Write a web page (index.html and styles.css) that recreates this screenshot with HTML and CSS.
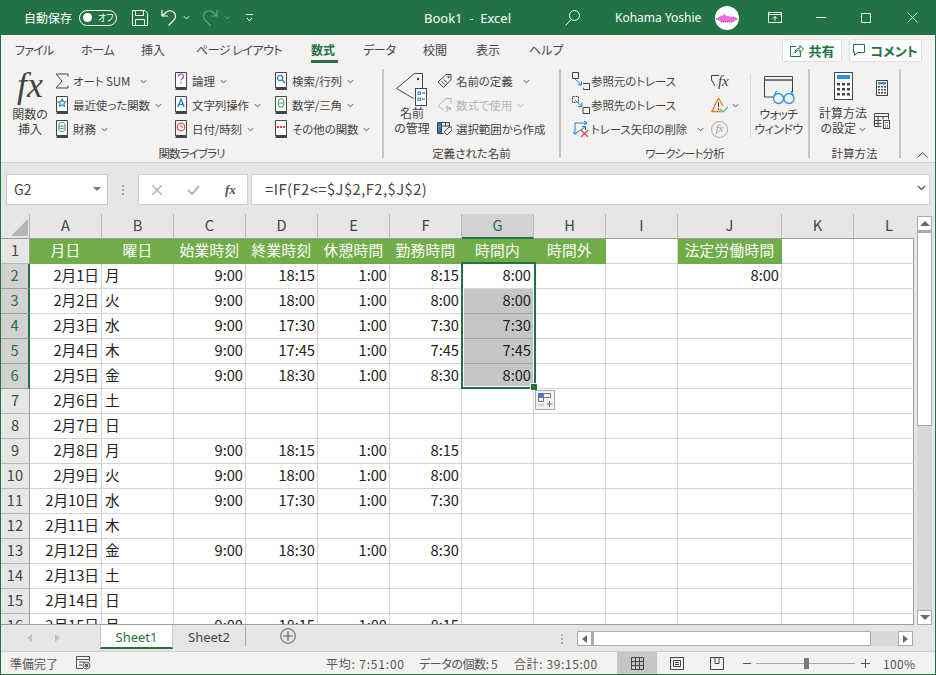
FILE: index.html
```html
<!DOCTYPE html>
<html lang="ja">
<head>
<meta charset="utf-8">
<title>Book1 - Excel</title>
<link rel="stylesheet" href="styles.css">
</head>
<body>
<svg class="defs" width="0" height="0">
  <symbol id="chev" viewBox="0 0 8 5"><path d="M1 1l3 3 3-3" fill="none" stroke="currentColor" stroke-width="1.1"/></symbol>
  <symbol id="book" viewBox="0 0 12 18"><path d="M.5 15.5V.5h11v15M.5 15.5a1 1 0 0 0 1 2h10v-2z" fill="#fff" stroke="#444"/><path d="M1 16.5h10.500" stroke="#444" stroke-width="2"/></symbol>
</svg>
<div class="window">
  <header class="titlebar">
    <span class="autosave">自動保存</span>
    <span class="toggle"><i class="knob"></i><b>オフ</b></span>
    <svg class="t-save" width="16" height="16" viewBox="0 0 16 16" fill="none" stroke="#fff"><path d="M.5.5h12.500l2.500 2.500v12.500h-15z"/><path d="M3.500.5v5h8v-5M3.500 15.500v-6h9v6"/></svg>
    <svg class="t-undo" width="16" height="17" viewBox="0 0 16 17" fill="none" stroke="#fff" stroke-width="1.200"><path d="M1 1v6h6M1.500 6.500l4-3.500a5.500 5.500 0 0 1 7 8.500l-5 5"/></svg>
    <svg class="t-chev c-white" width="7" height="5"><use href="#chev"/></svg>
    <svg class="t-redo" width="16" height="17" viewBox="0 0 16 17" fill="none" stroke="#6d9f83" stroke-width="1.200"><path d="M15 1v6H9M14.500 6.500l-4-3.500a5.500 5.500 0 0 0-7 8.500l5 5"/></svg>
    <svg class="t-chev c-dim" width="7" height="5"><use href="#chev"/></svg>
    <svg class="t-qat" width="8" height="8" viewBox="0 0 8 8" fill="none" stroke="#fff"><path d="M0 .5h7M1 4l2.500 3L6 4"/></svg>
    <span class="doc-title">Book1 &nbsp;-&nbsp; Excel</span>
    <svg class="t-search" width="15" height="16" viewBox="0 0 15 16" fill="none" stroke="#fff"><circle cx="9.500" cy="5.500" r="5"/><path d="M6 9.500L.5 15.500"/></svg>
    <span class="user">Kohama Yoshie</span>
    <svg class="avatar" width="24" height="24" viewBox="0 0 24 24"><circle cx="12" cy="12" r="12" fill="#fff"/><path d="M1 13l6-3 2-2 3 2 6 1 5 2-5 3H6z" fill="#ee6ee0"/><path d="M1 13l6-3M18 11l5 2M6 16h12" stroke="#333" stroke-width=".7" stroke-dasharray="1 1"/></svg>
    <svg class="t-disp" width="14" height="11" viewBox="0 0 14 11" fill="none" stroke="#fff"><path d="M.5.500h13v10H.5zM.5 2.500h13M7 8.500V4.500M5 6.500l2-2 2 2"/></svg>
    <svg class="t-min" width="10" height="1"><path d="M0 .5h10" stroke="#fff"/></svg>
    <svg class="t-max" width="10" height="10" fill="none" stroke="#fff"><path d="M.5.500h9v9h-9z"/></svg>
    <svg class="t-close" width="11" height="11" stroke="#fff"><path d="M.5.500l10 10M10.500.500l-10 10"/></svg>
  </header>

  <nav class="tabs">
    <span class="tab w-file">ファイル</span>
    <span class="tab w-home">ホーム</span>
    <span class="tab w-ins">挿入</span>
    <span class="tab w-page">ページ レイアウト</span>
    <span class="tab tab-active">数式</span>
    <span class="tab w-data">データ</span>
    <span class="tab w-rev">校閲</span>
    <span class="tab w-view">表示</span>
    <span class="tab w-help">ヘルプ</span>
    <span class="tab-btn btn-share"><svg width="15" height="14" viewBox="0 0 15 14" fill="none" stroke="#217346"><path d="M7 2.500H1.500v10h10V8M6 9c0-3 2-5 5-5V1.500l3.500 3.500L11 8.500V6C9 6 7 7 6 9z"/></svg>共有</span>
    <span class="tab-btn btn-comment"><svg width="13" height="13" viewBox="0 0 13 13" fill="none" stroke="#217346"><path d="M.5.500h11v8H4.500l-3 3v-3h-1z"/></svg>コメント</span>
  </nav>

  <section class="ribbon">
    <div class="group g-lib">
      <div class="g-body">
        <div class="big b-fx"><span class="fx-big">fx</span><span class="big-label">関数の<br>挿入</span></div>
        <div class="col col-1">
          <div class="item"><svg class="ic" width="14" height="16" viewBox="0 0 14 16" fill="none" stroke="#444"><path d="M13 3.500V1H1l6 7-6 7h12v-2.500"/></svg>オート SUM<svg class="chev ch-wide" width="7" height="5"><use href="#chev"/></svg></div>
          <div class="item"><svg class="ic" width="14" height="18" viewBox="0 0 14 18"><use href="#book" width="12" height="18" x="1"/><path d="M7 3l1.200 2.500 2.600.3-1.900 1.800.5 2.600L7 8.800 4.600 10.200l.5-2.600-1.900-1.800 2.600-.3z" fill="none" stroke="#1f7fc9" stroke-width="1.100"/></svg>最近使った関数<svg class="chev" width="7" height="5"><use href="#chev"/></svg></div>
          <div class="item"><svg class="ic" width="14" height="18" viewBox="0 0 14 18"><use href="#book" width="12" height="18" x="1"/><path d="M4 4c0-2 6-2 6 0v6c0 2-6 2-6 0zM4 5c0 1.500 6 1.500 6 0M4 7.500c0 1.500 6 1.500 6 0" fill="none" stroke="#4aa564"/></svg>財務<svg class="chev" width="7" height="5"><use href="#chev"/></svg></div>
        </div>
        <div class="col col-2">
          <div class="item"><svg class="ic" width="14" height="18" viewBox="0 0 14 18"><use href="#book" width="12" height="18" x="1"/><path d="M4.500 4.500a2.500 2.500 0 1 1 3.500 2.300c-.7.400-1 .8-1 1.700M7 10v1.500" fill="none" stroke="#b146c2" stroke-width="1.200"/></svg>論理<svg class="chev" width="7" height="5"><use href="#chev"/></svg></div>
          <div class="item"><svg class="ic" width="14" height="18" viewBox="0 0 14 18"><use href="#book" width="12" height="18" x="1"/><path d="M3.800 11L7 3l3.200 8M5 8.500h4" fill="none" stroke="#1f7fc9" stroke-width="1.300"/></svg>文字列操作<svg class="chev" width="7" height="5"><use href="#chev"/></svg></div>
          <div class="item"><svg class="ic" width="14" height="18" viewBox="0 0 14 18"><use href="#book" width="12" height="18" x="1"/><circle cx="7" cy="7" r="3.800" fill="none" stroke="#e64a4a" stroke-width="1.200"/><path d="M7 4.800V7h2" fill="none" stroke="#e64a4a"/></svg>日付/時刻<svg class="chev" width="7" height="5"><use href="#chev"/></svg></div>
        </div>
        <div class="col col-3">
          <div class="item"><svg class="ic" width="14" height="18" viewBox="0 0 14 18"><use href="#book" width="12" height="18" x="1"/><circle cx="6" cy="6" r="2.700" fill="none" stroke="#1f7fc9" stroke-width="1.200"/><path d="M8 8l3 3" stroke="#1f7fc9" stroke-width="1.400"/></svg>検索/行列<svg class="chev" width="7" height="5"><use href="#chev"/></svg></div>
          <div class="item"><svg class="ic" width="14" height="18" viewBox="0 0 14 18"><use href="#book" width="12" height="18" x="1"/><ellipse cx="7" cy="7" rx="2.800" ry="4.300" fill="none" stroke="#4aa564" stroke-width="1.100"/><path d="M4.500 7h5" stroke="#4aa564"/></svg>数学/三角<svg class="chev" width="7" height="5"><use href="#chev"/></svg></div>
          <div class="item"><svg class="ic" width="14" height="18" viewBox="0 0 14 18"><use href="#book" width="12" height="18" x="1"/><path d="M3 7h2M6 7h2M9 7h2" stroke="#e23c3c" stroke-width="2"/></svg>その他の関数<svg class="chev" width="7" height="5"><use href="#chev"/></svg></div>
        </div>
      </div>
      <div class="g-label kana-tight">関数ライブラリ</div>
    </div>

    <div class="group g-name">
      <div class="g-body">
        <div class="big b-name">
          <svg class="big-ic" width="34" height="38" viewBox="0 0 34 38" fill="none"><path d="M27.500 17V2.500H19.500L1.500 17.500 18.500 27.500" stroke="#444"/><circle cx="23" cy="8" r="1.200" fill="#444"/><rect x="20.500" y="17.500" width="11" height="17" fill="#fff" stroke="#444"/><path d="M23 21h2.500v2.500H23zM23 27h2.500v2.500H23z" fill="none" stroke="#1f7fc9"/><path d="M27 22h3M27 28h3" stroke="#444"/></svg>
          <span class="big-label">名前<br>の管理</span>
        </div>
        <div class="col col-n">
          <div class="item"><svg class="ic" width="15" height="16" viewBox="0 0 15 16" fill="none" stroke="#444"><path d="M1 9l8-7.500h5v5L6.500 14.500zM4.500 8.500l3.500 3M6.500 6.500l3.500 3"/><circle cx="11.500" cy="4" r=".8"/></svg>名前の定義<svg class="chev ch-wide" width="7" height="5"><use href="#chev"/></svg></div>
          <div class="item is-off"><svg class="ic" width="15" height="16" viewBox="0 0 15 16" fill="none" stroke="#b5b5b5"><path d="M7 13L1 9l8-7.500h5V7"/><path d="M9 10c1-2 2-1 2 0l-1 4c0 1-1 1-1.500.5M8 11h4M12 10l2 3M14 10l-2 3"/></svg>数式で使用<svg class="chev" width="7" height="5"><use href="#chev"/></svg></div>
          <div class="item"><svg class="ic" width="15" height="16" viewBox="0 0 15 16" fill="none" stroke="#444"><path d="M.5 1.500h12v5M.5 1.500v11h6M.5 5h12M4.500 1.500V13M8.500 1.500v4"/><rect x="1" y="6" width="3" height="6" fill="#1f7fc9" stroke="none"/><rect x="1" y="2" width="3" height="3" fill="#1f7fc9" stroke="none"/><path d="M7 11l5-5h3v3l-5 5z" fill="#f3f2f1"/></svg>選択範囲から作成</div>
        </div>
      </div>
      <div class="g-label">定義された名前</div>
    </div>

    <div class="group g-audit">
      <div class="g-body">
        <div class="col col-t">
          <div class="item"><svg class="ic-t" width="18" height="18" viewBox="0 0 18 18" fill="none"><path d="M.5.500h6v6h-6z" stroke="#444"/><path d="M3 7l6 5.500" stroke="#1f7fc9"/><path d="M9.500 9.500v3.500H6" stroke="#1f7fc9"/><path d="M11 11.500h6.500v6H11" stroke="#444"/><path d="M11.500 17.500v-2" stroke="#1f7fc9"/></svg>参照元のトレース</div>
          <div class="item"><svg class="ic-t" width="18" height="18" viewBox="0 0 18 18" fill="none"><path d="M.5.500h6v6h-6z" stroke="#444" stroke-dasharray="2 1"/><path d="M3 4l6.500 6" stroke="#1f7fc9"/><path d="M10 6.500v4H6" stroke="#1f7fc9"/><path d="M11 11.500h6.500v6H11z" stroke="#444"/></svg>参照先のトレース</div>
          <div class="item"><svg class="ic-t" width="18" height="18" viewBox="0 0 18 18" fill="none" stroke="#1f7fc9"><path d="M3 14V3h12M1 12l2 2.500L5 12M12 1l3 2-3 2M4 13L13 7M10 6.500h3.500V10"/><path d="M9 10l7 7M16 10l-7 7" stroke="#e64a4a" stroke-width="1.300"/></svg>トレース矢印の削除<svg class="chev ch-wide" width="7" height="5"><use href="#chev"/></svg></div>
        </div>
        <div class="col col-check">
          <div class="item item-ic"><svg width="8" height="12" viewBox="0 0 8 12" class="slash" fill="none" stroke="#444"><path d="M8 .5H.5V5L4 11"/></svg><span class="fx-s">fx</span></div>
          <div class="item item-ic"><svg width="17" height="16" viewBox="0 0 17 16" fill="none"><path d="M7.500 1L1 14.500h9" stroke="#e67e22" stroke-width="1.300"/><path d="M7.500 1L12 9" stroke="#e67e22" stroke-width="1.300"/><path d="M7.500 5v5M7.500 11v2" stroke="#444"/><path d="M9 12l3 3 5-5" stroke="#5bb06d" stroke-width="1.200"/></svg><svg class="chev ch-near" width="7" height="5"><use href="#chev"/></svg></div>
          <div class="item item-ic"><span class="fx-c">fx</span></div>
        </div>
        <div class="big b-watch">
          <svg class="big-ic" width="32" height="30" viewBox="0 0 32 30" fill="none"><path d="M1.500 22V1.500h28V17" stroke="#444"/><path d="M1.500 5h28" stroke="#444" stroke-width="1.400"/><path d="M1.500 22h9" stroke="#444"/><circle cx="15.500" cy="23.500" r="5" stroke="#2a93dc" stroke-width="1.300"/><circle cx="26" cy="23.500" r="5" stroke="#2a93dc" stroke-width="1.300"/><path d="M20.500 22.500h0.500M11 21l2.500-5M30.500 21L28 16" stroke="#2a93dc" stroke-width="1.300"/></svg>
          <span class="big-label">ウォッチ<br>ウィンドウ</span>
        </div>
      </div>
      <div class="g-label kana-tight">ワークシート分析</div>
    </div>

    <div class="group g-calc">
      <div class="g-body">
        <div class="big b-calc">
          <svg class="big-ic" width="19" height="28" viewBox="0 0 19 28"><rect x=".5" y=".5" width="18" height="27" fill="#fff" stroke="#444"/><rect x="3" y="3" width="13" height="4" fill="#2a93dc"/><path d="M3 11h3v2.500H3zM8 11h3v2.500H8zM13 11h3v2.500h-3zM3 16h3v2.500H3zM8 16h3v2.500H8zM13 16h3v2.500h-3zM3 21h3v2.500H3zM8 21h3v2.500H8zM13 21h3v2.500h-3z" fill="#444"/></svg>
          <span class="big-label">計算方法<br>の設定 <svg class="chev-in" width="7" height="5"><use href="#chev"/></svg></span>
        </div>
        <div class="col col-opt">
          <svg class="opt-a" width="12" height="16" viewBox="0 0 12 16"><rect x=".5" y=".5" width="11" height="15" fill="#fff" stroke="#444"/><rect x="2" y="2" width="8" height="2.500" fill="#2a93dc"/><path d="M2 6h2v1.500H2zM5 6h2v1.500H5zM8 6h2v1.500H8zM2 9h2v1.500H2zM5 9h2v1.500H5zM8 9h2v1.500H8zM2 12h2v1.500H2zM5 12h2v1.500H5zM8 12h2v1.500H8z" fill="#444"/></svg>
          <svg class="opt-b" width="16" height="16" viewBox="0 0 16 16" fill="none" stroke="#444"><path d="M7.500 13.500H.5V.5h14v6M.5 3.500h14M.5 7.500h7M.5 10.500h7M4 3.500v10M9 3.500v3"/><rect x="9.500" y="7.500" width="6" height="8" fill="#fff"/><path d="M11 9.500h3" stroke="#2a93dc"/><path d="M11 12h1M13 12h1M11 14h1M13 14h1"/></svg>
        </div>
      </div>
      <div class="g-label">計算方法</div>
    </div>
    <svg class="collapse" width="11" height="6" viewBox="0 0 11 6" fill="none" stroke="#444"><path d="M.5 5.500l5-5 5 5"/></svg>
  </section>

  <section class="formula">
    <div class="namebox"><span>G2</span><i class="tri"></i></div>
    <div class="fdots"><i></i><i></i><i></i></div>
    <div class="fbtns">
      <svg width="10" height="10" stroke="#b4b4b4" stroke-width="1.500"><path d="M0 0l10 10M10 0L0 10"/></svg>
      <svg width="13" height="10" fill="none" stroke="#b4b4b4" stroke-width="2"><path d="M1 5l4 4 7-8"/></svg>
      <span class="fx-f">fx</span>
    </div>
    <div class="finput"><span>=IF(F2&lt;=$J$2,F2,$J$2)</span><svg width="9" height="6" viewBox="0 0 9 6" fill="none" stroke="#666" stroke-width="1.500"><path d="M1 1l3.500 3.500L8 1"/></svg></div>
  </section>

  <section class="sheet">
    <div class="gridwrap">
      <table class="grid">
        <colgroup><col class="c-h"><col class="c-n"><col class="c-n"><col class="c-n"><col class="c-n"><col class="c-n"><col class="c-n"><col class="c-n"><col class="c-n"><col class="c-n"><col class="c-j"><col class="c-n"><col class="c-l"></colgroup>
        <thead>
          <tr><th class="corner"><svg width="17" height="17"><path d="M17 0v17H0z" fill="#b4b4b4"/></svg></th><th>A</th><th>B</th><th>C</th><th>D</th><th>E</th><th>F</th><th class="col-sel">G</th><th>H</th><th>I</th><th>J</th><th>K</th><th class="last">L</th></tr>
        </thead>
        <tbody>
          <tr><th>1</th><td class="hd">月日</td><td class="hd">曜日</td><td class="hd">始業時刻</td><td class="hd">終業時刻</td><td class="hd">休憩時間</td><td class="hd">勤務時間</td><td class="hd">時間内</td><td class="hd">時間外</td><td></td><td class="hd">法定労働時間</td><td></td><td class="last"></td></tr>
          <tr><th class="row-sel">2</th><td class="r">2月1日</td><td>月</td><td class="r">9:00</td><td class="r">18:15</td><td class="r">1:00</td><td class="r">8:15</td><td class="r">8:00</td><td></td><td></td><td class="r">8:00</td><td></td><td class="last"></td></tr>
          <tr><th class="row-sel">3</th><td class="r">2月2日</td><td>火</td><td class="r">9:00</td><td class="r">18:00</td><td class="r">1:00</td><td class="r">8:00</td><td class="r sel">8:00</td><td></td><td></td><td></td><td></td><td class="last"></td></tr>
          <tr><th class="row-sel">4</th><td class="r">2月3日</td><td>水</td><td class="r">9:00</td><td class="r">17:30</td><td class="r">1:00</td><td class="r">7:30</td><td class="r sel">7:30</td><td></td><td></td><td></td><td></td><td class="last"></td></tr>
          <tr><th class="row-sel">5</th><td class="r">2月4日</td><td>木</td><td class="r">9:00</td><td class="r">17:45</td><td class="r">1:00</td><td class="r">7:45</td><td class="r sel">7:45</td><td></td><td></td><td></td><td></td><td class="last"></td></tr>
          <tr><th class="row-sel">6</th><td class="r">2月5日</td><td>金</td><td class="r">9:00</td><td class="r">18:30</td><td class="r">1:00</td><td class="r">8:30</td><td class="r sel">8:00</td><td></td><td></td><td></td><td></td><td class="last"></td></tr>
          <tr><th>7</th><td class="r">2月6日</td><td>土</td><td></td><td></td><td></td><td></td><td></td><td></td><td></td><td></td><td></td><td class="last"></td></tr>
          <tr><th>8</th><td class="r">2月7日</td><td>日</td><td></td><td></td><td></td><td></td><td></td><td></td><td></td><td></td><td></td><td class="last"></td></tr>
          <tr><th>9</th><td class="r">2月8日</td><td>月</td><td class="r">9:00</td><td class="r">18:15</td><td class="r">1:00</td><td class="r">8:15</td><td></td><td></td><td></td><td></td><td></td><td class="last"></td></tr>
          <tr><th>10</th><td class="r">2月9日</td><td>火</td><td class="r">9:00</td><td class="r">18:00</td><td class="r">1:00</td><td class="r">8:00</td><td></td><td></td><td></td><td></td><td></td><td class="last"></td></tr>
          <tr><th>11</th><td class="r">2月10日</td><td>水</td><td class="r">9:00</td><td class="r">17:30</td><td class="r">1:00</td><td class="r">7:30</td><td></td><td></td><td></td><td></td><td></td><td class="last"></td></tr>
          <tr><th>12</th><td class="r">2月11日</td><td>木</td><td></td><td></td><td></td><td></td><td></td><td></td><td></td><td></td><td></td><td class="last"></td></tr>
          <tr><th>13</th><td class="r">2月12日</td><td>金</td><td class="r">9:00</td><td class="r">18:30</td><td class="r">1:00</td><td class="r">8:30</td><td></td><td></td><td></td><td></td><td></td><td class="last"></td></tr>
          <tr><th>14</th><td class="r">2月13日</td><td>土</td><td></td><td></td><td></td><td></td><td></td><td></td><td></td><td></td><td></td><td class="last"></td></tr>
          <tr><th>15</th><td class="r">2月14日</td><td>日</td><td></td><td></td><td></td><td></td><td></td><td></td><td></td><td></td><td></td><td class="last"></td></tr>
          <tr><th>16</th><td class="r">2月15日</td><td>月</td><td class="r">9:00</td><td class="r">18:15</td><td class="r">1:00</td><td class="r">8:15</td><td></td><td></td><td></td><td></td><td></td><td class="last"></td></tr>
        </tbody>
      </table>
      <div class="selection"><i class="handle"></i></div>
      <div class="smarttag"><svg width="16" height="15" viewBox="0 0 16 15" fill="none"><rect x=".5" y=".5" width="5" height="4" fill="#3f78e0" stroke="#3f78e0"/><path d="M5.500.5h7v4h-7zM.5 4.500h5v4h-5z" stroke="#777"/><path d="M.5 12h6" stroke="#777" stroke-dasharray="1 1"/><path d="M11.500 8v6M8.500 11h6" stroke="#777"/></svg></div>
    </div>
    <div class="vscroll">
      <div class="sb-btn"><i class="up"></i></div>
      <div class="v-thumb"></div>
      <div class="v-track"></div>
      <div class="sb-btn"><i class="down"></i></div>
    </div>
  </section>

  <section class="tabstrip">
    <i class="nav-l"></i><i class="nav-r"></i>
    <span class="sheet-tab sheet-active">Sheet1</span>
    <span class="sheet-tab">Sheet2</span>
    <svg class="add" width="16" height="16" viewBox="0 0 16 16" fill="none" stroke="#7a7a7a"><circle cx="8" cy="8" r="7.300" stroke-width="1.300"/><path d="M8 3.500v9M3.500 8h9" stroke-width="1.500"/></svg>
    <div class="hdots"><i></i><i></i><i></i></div>
    <div class="hscroll">
      <div class="sb-btn h"><i class="left"></i></div>
      <div class="h-thumb"></div>
      <div class="h-track"></div>
      <div class="sb-btn h"><i class="right"></i></div>
    </div>
  </section>

  <footer class="status">
    <span class="st-ready">準備完了</span>
    <svg class="st-macro" width="15" height="14" viewBox="0 0 15 14" fill="none" stroke="#555"><path d="M7 12.500H.5V.5h13v5M.5 3.500h13M3 6h6M3 9h3"/><circle cx="10.500" cy="9.500" r="3.500"/><circle cx="10.500" cy="9.500" r="1.500" fill="#555"/></svg>
    <span class="st-val st-avg">平均: 7:51:00</span>
    <span class="st-val st-cnt">データの個数: 5</span>
    <span class="st-val st-sum">合計: 39:15:00</span>
    <span class="view view-on"><svg width="13" height="13" fill="none" stroke="#444"><path d="M.5.500h12v12H.5zM4.500.5v12M8.500.5v12M.5 4.500h12M.5 8.500h12"/></svg></span>
    <span class="view"><svg width="14" height="13" fill="none" stroke="#444"><path d="M.5.500h13v12H.5zM3.500 3.500h7v6h-7zM5 5.500h4M5 7.500h4"/></svg></span>
    <span class="view"><svg width="14" height="13" fill="none" stroke="#444"><path d="M.5 8.500V.5h13v12H.5V8M5 .5v6h4V.5"/></svg></span>
    <svg class="z-minus" width="8" height="1"><path d="M0 .5h8" stroke="#555"/></svg>
    <div class="slider"><i></i></div>
    <svg class="z-plus" width="9" height="9" stroke="#555"><path d="M0 4.500h9M4.500 0v9"/></svg>
    <span class="z-val">100%</span>
  </footer>
</div>
</body>
</html>
```

FILE: styles.css
```css
* { box-sizing: border-box; }
html, body { margin: 0; padding: 0; }
body {
  width: 936px; height: 675px; overflow: hidden;
  font-family: "Noto Sans CJK JP", "Noto Sans", sans-serif;
  font-size: 12px; color: #444;
  font-feature-settings: "palt";
}
.defs { position: absolute; }
.window {
  width: 936px; height: 675px; display: flex; flex-direction: column;
  border: 1px solid #217346; border-top: 0; background: #f3f2f1; overflow: hidden;
}

/* title bar */
.titlebar {
  flex: none; height: 35px; margin: 0 -1px; background: #217346; color: #fff;
  display: flex; align-items: center; padding-left: 24px; font-size: 12px;
}
.autosave { width: 48px; }
.toggle {
  width: 38px; height: 16px; margin-left: 7px; border: 1px solid #fff; border-radius: 8px;
  display: flex; align-items: center; font-size: 9px; padding-left: 3px;
}
.knob { width: 9px; height: 9px; border-radius: 50%; background: #fff; }
.toggle b { font-weight: 400; margin-left: 6px; line-height: 14px; }
.t-save { margin-left: 15px; }
.t-undo { margin-left: 13px; }
.t-chev { margin-left: 6px; }
.c-white { color: #fff; }
.c-dim { color: #6d9f83; }
.t-redo { margin-left: 12px; }
.t-qat { margin-left: 15px; }
.doc-title { margin-left: 170px; width: 141px; font-family: "Noto Sans", sans-serif; font-size: 13px; white-space: nowrap; }
.user { margin-left: 35px; width: 100px; font-family: "Noto Sans", sans-serif; font-size: 12px; white-space: nowrap; }
.avatar { flex: none; }
.t-disp { margin-left: 29px; }
.t-min { margin-left: 34px; }
.t-max { margin-left: 35px; }
.t-close { margin-left: 36px; }

/* tabs */
.tabs { flex: none; height: 30px; display: flex; align-items: flex-start; padding-left: 14px; position: relative; }
.tab { flex: none; font-size: 12px; line-height: 30px; height: 28px; white-space: nowrap; }
.w-file { width: 66px; letter-spacing: -.8px; }
.w-home { width: 60px; letter-spacing: -.3px; }
.w-ins { width: 55px; }
.w-page { width: 115px; letter-spacing: -.5px; }
.w-data { width: 60px; letter-spacing: -.3px; }
.w-rev { width: 53px; }
.w-view { width: 53px; }
.w-help { width: 60px; }
.tab-active { width: 27px; margin-right: 25px; font-weight: 700; color: #217346; border-bottom: 3px solid #217346; }
.tab-btn {
  height: 23px; margin-top: 4px; background: #fff; border: 1px solid #e1dfdd; border-radius: 2px;
  display: flex; align-items: center; justify-content: center; gap: 4px;
  font-size: 13px; font-weight: 700; color: #217346; flex: none;
}
.btn-share { width: 60px; margin-left: auto; margin-right: 7px; }
.btn-comment { width: 73px; margin-right: 13px; }

/* ribbon */
.ribbon { flex: none; height: 98px; display: flex; padding-top: 4px; border-bottom: 1px solid #d2d0ce; position: relative; }
.group { height: 89px; border-right: 2px solid #c8c6c4; display: flex; flex-direction: column; flex: none; }
.g-lib { width: 383px; }
.g-name { width: 177px; }
.g-audit { width: 249px; }
.g-calc { width: 91px; }
.g-body { flex: none; height: 72px; display: flex; }
.g-label { flex: none; height: 16px; margin-top: 4px; line-height: 16px; text-align: center; white-space: nowrap; font-size: 11.5px; }
.kana-tight { letter-spacing: -.9px; }
.col { display: flex; flex-direction: column; flex: none; }
.item { height: 24px; display: flex; align-items: center; white-space: nowrap; font-size: 11.5px; letter-spacing: -.1px; }
.ic { margin-right: 4px; flex: none; }
.ic-t { margin-right: 1px; flex: none; }
.chev { margin-left: 5px; flex: none; color: #444; }
.ch-wide { margin-left: 10px; }
.ch-near { margin-left: 4px; }
.big { display: flex; flex-direction: column; align-items: center; flex: none; text-align: center; }
.big-label { line-height: 15px; white-space: nowrap; font-size: 12px; }
.b-fx { width: 40px; margin-left: 9px; }
.fx-big { font-family: "Liberation Serif", serif; font-style: italic; font-size: 36px; line-height: 32px; height: 32px; color: #444; margin-bottom: 5px; }
.col-1 { width: 119px; margin-left: 5px; }
.col-2 { width: 100px; }
.col-3 { width: 100px; }
.b-name { width: 46px; margin-left: 5px; }
.big-ic { flex: none; margin-top: 2px; }
.b-name .big-label { margin-top: -4px; }
.col-n { margin-left: 2px; width: 122px; }
.is-off { color: #b5b5b5; }
.is-off .chev { color: #b5b5b5; }
.col-t { margin-left: 11px; width: 139px; }
.col-check { width: 38px; }
.item-ic { position: relative; }
.fx-s { font-family: "Liberation Serif", serif; font-style: italic; font-size: 15px; margin-left: -1px; color: #444; }
.fx-c { width: 17px; height: 17px; border: 1.5px solid #a6a6a6; border-radius: 50%; font-family: "Liberation Serif", serif; font-style: italic; font-size: 11px; line-height: 13px; text-align: center; color: #9a9a9a; }
.slash { flex: none; }
.b-watch { width: 56px; margin-left: 1px; border-left: 1px solid #dcdad8; height: 64px; padding-top: 1px; margin-top: 5px; }
.b-watch .big-ic { margin-top: 0; }
.b-watch .big-label { margin-top: 1px; font-size: 12px; letter-spacing: -.6px; }
.b-calc { width: 62px; margin-left: 2px; }
.b-calc .big-ic { margin-bottom: 3px; margin-top: 3px; }
.b-calc .big-label { margin-top: 2px; }
.chev-in { vertical-align: 1px; }
.col-opt { width: 20px; margin-left: -2px; align-items: center; }
.opt-a { margin-top: 11px; }
.opt-b { margin-top: 17px; }
.collapse { position: absolute; right: 7px; bottom: 4px; }

/* formula bar */
.formula { flex: none; height: 51px; background: #e6e6e6; display: flex; align-items: flex-start; padding: 11px 0 0 5px; }
.namebox { width: 102px; height: 31px; background: #fff; border: 1px solid #c6c6c6; display: flex; align-items: center; justify-content: space-between; padding: 0 6px 2px 7px; font-size: 14px; }
.tri { width: 0; height: 0; border: 4px solid transparent; border-top: 4px solid #777; border-bottom: 0; }
.fdots { width: 30px; height: 31px; display: flex; flex-direction: column; align-items: center; justify-content: center; gap: 2px; }
.fdots i { width: 2px; height: 2px; background: #a6a6a6; }
.fbtns { width: 110px; height: 31px; background: #fff; border: 1px solid #d0d0d0; display: flex; align-items: center; gap: 25px; padding-left: 13px; }
.fx-f { font-family: "Liberation Serif", serif; font-style: italic; font-weight: 700; font-size: 13px; color: #555; }
.finput { width: 679px; height: 31px; margin-left: 3px; background: #fff; border: 1px solid #d0d0d0; display: flex; align-items: center; justify-content: space-between; padding: 0 3px 3px 13px; font-size: 14.67px; letter-spacing: .5px; }

/* sheet */
.sheet { flex: none; height: 411px; display: flex; background: #e6e6e6; }
.gridwrap { width: 913px; height: 411px; position: relative; overflow: hidden; background: #fff; border-bottom: 1px solid #9e9e9e; }
.grid { border-collapse: separate; border-spacing: 0; table-layout: fixed; width: 913px; font-size: 14.67px; color: #222; }
.c-h { width: 29px; }
.c-n { width: 72px; }
.c-j { width: 104px; }
.c-l { width: 60px; }
.grid th, .grid td { padding: 0; height: 25px; line-height: 21px; vertical-align: top; overflow: hidden; white-space: nowrap; }
.grid th { background: #e6e6e6; font-weight: 400; color: #444; font-size: 14.67px; text-align: center; border-right: 1px solid #9e9e9e; border-bottom: 1px solid #b8b8b8; }
.grid thead th { border-right-color: #b8b8b8; border-bottom: 1px solid #9e9e9e; }
.grid thead th.last { border-right: 0; padding-left: 10px; }
.grid thead th.corner { line-height: 0; vertical-align: bottom; text-align: right; padding: 0 1px 2px 0; }
.grid tbody th { border-right: 1px solid #9e9e9e; }
.grid td { border-right: 1px solid #d4d4d4; border-bottom: 1px solid #d4d4d4; padding: 0 2px 0 3px; background: #fff; }
.grid td.last { border-right: 1px solid #9e9e9e; }
.grid td.r { text-align: right; }
.grid td.hd { background: #70ad47; color: #fff; text-align: center; border-color: #70ad47; padding: 0; letter-spacing: .3px; }
.grid thead th.col-sel { background: #d2d2d2; color: #217346; border-bottom: 2px solid #217346; }
.grid tbody th.row-sel { background: #d2d2d2; color: #217346; border-right: 2px solid #217346; border-bottom-color: #9e9e9e; }
.grid td.sel { background: #c6c6c6; border-bottom-color: #a8a8a8; box-shadow: inset 1px 0 #fff; }
.selection { position: absolute; left: 460px; top: 48px; width: 75px; height: 127px; border: 2px solid #217346; box-shadow: inset 1px 1px #fff, inset -1px -1px #fff; pointer-events: none; }
.handle { position: absolute; right: -3px; bottom: -3px; width: 6px; height: 6px; background: #217346; outline: 1px solid #fff; }
.smarttag { position: absolute; left: 534px; top: 176px; width: 20px; height: 20px; background: #f3f3f3; border: 1px solid #ababab; padding: 2px; line-height: 0; }

/* scrollbars */
.sb-btn { width: 15px; height: 15px; flex: none; background: #fff; border: 1px solid #ababab; display: flex; align-items: center; justify-content: center; }
.sb-btn i { width: 0; height: 0; border: 4px solid transparent; }
.sb-btn i.up { border-top: 0; border-bottom: 5px solid #6a6a6a; border-left-width: 5px; border-right-width: 5px; }
.sb-btn i.down { border-bottom: 0; border-top: 5px solid #6a6a6a; border-left-width: 5px; border-right-width: 5px; }
.sb-btn i.left { border-left: 0; border-right: 5px solid #6a6a6a; }
.sb-btn i.right { border-right: 0; border-left: 5px solid #6a6a6a; }
.vscroll { width: 15px; margin-left: 3px; background: #e6e6e6; display: flex; flex-direction: column; padding-top: 2px; height: 411px; flex: none; }
.v-thumb { height: 195px; background: #fff; border: 1px solid #ababab; border-top-width: 2px; flex: none; }
.v-track { flex: 1; background: #d8d8d8; }

/* sheet tabs */
.tabstrip { flex: none; height: 27px; background: #e6e6e6; display: flex; align-items: flex-start; position: relative; border-bottom: 1px solid #d2d0ce; }
.nav-l, .nav-r { width: 0; height: 0; margin-top: 9px; border: 4px solid transparent; }
.nav-l { margin-left: 26px; border-left: 0; border-right: 5px solid #c0c0c0; }
.nav-r { margin-left: 23px; border-right: 0; border-left: 5px solid #c0c0c0; }
.sheet-tab { width: 73px; height: 24px; line-height: 24px; text-align: center; font-family: "Noto Sans", sans-serif; font-size: 13px; color: #444; flex: none; }
.sheet-tab + .sheet-tab { border-right: 1px solid #a6a6a6; height: 20px; margin-top: 1px; line-height: 22px; }
.sheet-active { margin-left: 40px; background: #fff; color: #217346; border-left: 1px solid #c8c8c8; border-right: 1px solid #c8c8c8; border-bottom: 2px solid #217346; }
.add { margin: 3px 0 0 34px; }
.hdots { margin: 9px 0 0 265px; display: flex; flex-direction: column; gap: 2px; }
.hdots i { width: 2px; height: 2px; background: #b4b4b4; }
.hscroll { margin: 6px 0 0 14px; display: flex; height: 15px; width: 336px; }
.sb-btn.h { width: 15px; }
.h-thumb { width: 279px; background: #fff; border: 1px solid #ababab; border-left-width: 2px; }
.h-track { flex: 1; background: #d8d8d8; }

/* status bar */
.status { flex: none; height: 22px; display: flex; align-items: center; font-size: 12px; color: #555; }
.st-ready { margin-left: 9px; width: 66px; }
.st-macro { flex: none; }
.st-val { white-space: nowrap; }
.st-avg { margin-left: 235px; width: 93px; letter-spacing: .8px; }
.st-cnt { width: 95px; letter-spacing: -.4px; }
.st-sum { width: 103px; letter-spacing: .6px; }
.view { width: 40px; height: 22px; display: flex; align-items: center; justify-content: center; flex: none; }
.view-on { background: #c6c6c6; }
.z-minus { margin-left: 6px; flex: none; }
.slider { width: 99px; height: 1px; margin-left: 5px; background: #a6a6a6; position: relative; flex: none; }
.slider i { position: absolute; left: 48px; top: -5px; width: 5px; height: 11px; background: #7a7a7a; }
.z-plus { margin-left: 6px; flex: none; }
.z-val { margin-left: 13px; letter-spacing: .3px; }
```
